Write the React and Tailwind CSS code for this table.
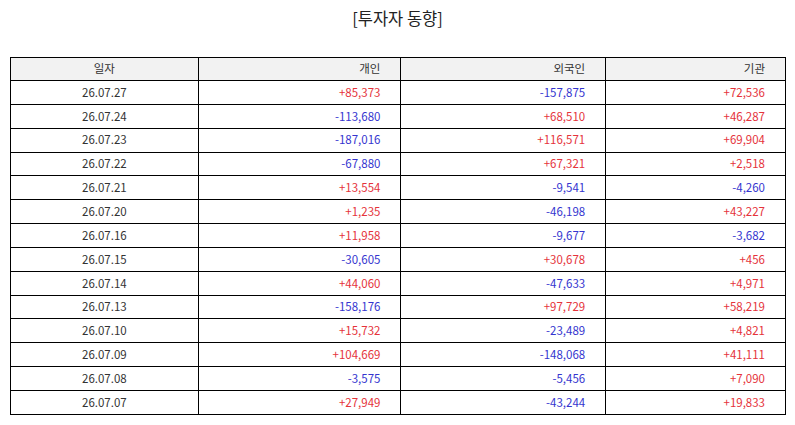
import React from "react";

const rows = [
  ["26.07.27", "+85,373", "-157,875", "+72,536"],
  ["26.07.24", "-113,680", "+68,510", "+46,287"],
  ["26.07.23", "-187,016", "+116,571", "+69,904"],
  ["26.07.22", "-67,880", "+67,321", "+2,518"],
  ["26.07.21", "+13,554", "-9,541", "-4,260"],
  ["26.07.20", "+1,235", "-46,198", "+43,227"],
  ["26.07.16", "+11,958", "-9,677", "-3,682"],
  ["26.07.15", "-30,605", "+30,678", "+456"],
  ["26.07.14", "+44,060", "-47,633", "+4,971"],
  ["26.07.13", "-158,176", "+97,729", "+58,219"],
  ["26.07.10", "+15,732", "-23,489", "+4,821"],
  ["26.07.09", "+104,669", "-148,068", "+41,111"],
  ["26.07.08", "-3,575", "-5,456", "+7,090"],
  ["26.07.07", "+27,949", "-43,244", "+19,833"],
];

const font = { fontFamily: '"Noto Sans CJK KR", "Noto Sans", sans-serif' };

const Num = ({ v }) => (
  <td
    className={`border border-black pr-[20px] text-right ${
      v.startsWith("-") ? "text-[#3535cf]" : "text-[#e5333b]"
    }`}
  >
    {v}
  </td>
);

const App = () => {
  return (
    <div className="w-[795px] h-[425px] bg-white px-[10px] pt-[6px]" style={font}>
      {/* title */}
      <h1 className="text-center text-[16.5px] leading-[24px] text-[#222]">[투자자 동향]</h1>

      <table className="mt-[27px] w-[776px] border-collapse border border-black text-[11.5px] text-[#333]">
        <colgroup>
          <col className="w-[188px]" />
          <col className="w-[203px]" />
          <col className="w-[205px]" />
          <col className="w-[180px]" />
        </colgroup>
        <thead>
          <tr className="h-[23px] bg-[#f2f2f2]">
            <th className="border border-black font-normal text-center">일자</th>
            <th className="border border-black font-normal text-right pr-[20px]">개인</th>
            <th className="border border-black font-normal text-right pr-[20px]">외국인</th>
            <th className="border border-black font-normal text-right pr-[20px]">기관</th>
          </tr>
        </thead>
        <tbody>
          {rows.map((r) => (
            <tr key={r[0]} className="h-[23.85px]">
              <td className="border border-black text-center">{r[0]}</td>
              <Num v={r[1]} />
              <Num v={r[2]} />
              <Num v={r[3]} />
            </tr>
          ))}
        </tbody>
      </table>
    </div>
  );
};

export default App;
